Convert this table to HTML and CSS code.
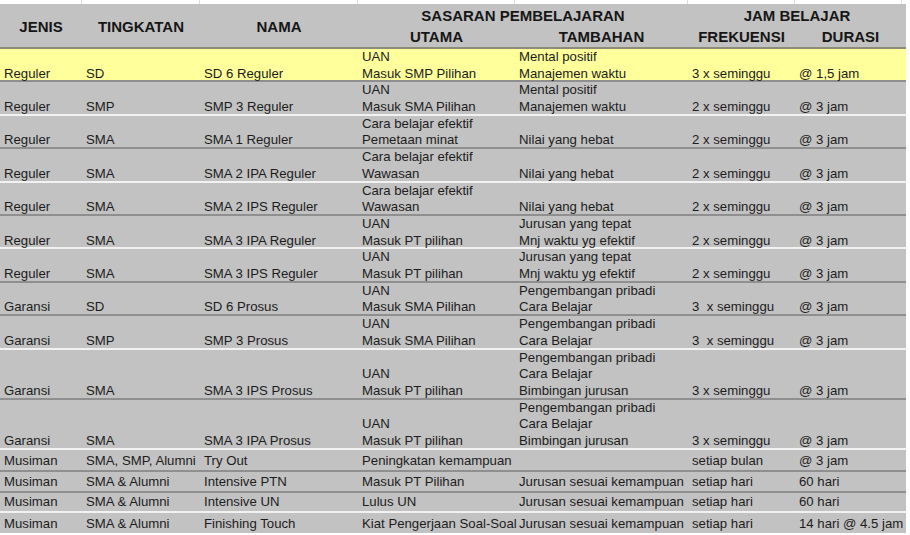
FILE: index.html
```html
<!DOCTYPE html>
<html lang="id">
<head>
<meta charset="utf-8">
<title>Program Belajar</title>
<link rel="stylesheet" href="styles.css">
</head>
<body>
<div class="sheet">
  <div class="strip grid"><span></span><span></span><span></span><span></span><span></span><span></span><span></span></div>

  <div class="head grid">
    <div class="hc tall">JENIS</div>
    <div class="hc tall">TINGKATAN</div>
    <div class="hc tall">NAMA</div>
    <div class="hc wide2 ra">SASARAN PEMBELAJARAN</div>
    <div class="hc wide2 ra">JAM BELAJAR</div>
    <div class="hc rb">UTAMA</div>
    <div class="hc rb">TAMBAHAN</div>
    <div class="hc rb">FREKUENSI</div>
    <div class="hc rb">DURASI</div>
  </div>

  <div class="row grid h2 dk yel">
    <div class="c">Reguler</div><div class="c">SD</div><div class="c">SD 6 Reguler</div>
    <div class="c"><span>UAN</span><span>Masuk SMP Pilihan</span></div>
    <div class="c"><span>Mental positif</span><span>Manajemen waktu</span></div>
    <div class="c">3 x seminggu</div><div class="c">@ 1,5 jam</div>
  </div>

  <div class="row grid h2 dk">
    <div class="c">Reguler</div><div class="c">SMP</div><div class="c">SMP 3 Reguler</div>
    <div class="c"><span>UAN</span><span>Masuk SMA Pilihan</span></div>
    <div class="c"><span>Mental positif</span><span>Manajemen waktu</span></div>
    <div class="c">2 x seminggu</div><div class="c">@ 3 jam</div>
  </div>

  <div class="row grid h2 lt">
    <div class="c">Reguler</div><div class="c">SMA</div><div class="c">SMA 1 Reguler</div>
    <div class="c"><span>Cara belajar efektif</span><span>Pemetaan minat</span></div>
    <div class="c">Nilai yang hebat</div>
    <div class="c">2 x seminggu</div><div class="c">@ 3 jam</div>
  </div>

  <div class="row grid h2 dk">
    <div class="c">Reguler</div><div class="c">SMA</div><div class="c">SMA 2 IPA Reguler</div>
    <div class="c"><span>Cara belajar efektif</span><span>Wawasan</span></div>
    <div class="c">Nilai yang hebat</div>
    <div class="c">2 x seminggu</div><div class="c">@ 3 jam</div>
  </div>

  <div class="row grid h2 lt">
    <div class="c">Reguler</div><div class="c">SMA</div><div class="c">SMA 2 IPS Reguler</div>
    <div class="c"><span>Cara belajar efektif</span><span>Wawasan</span></div>
    <div class="c">Nilai yang hebat</div>
    <div class="c">2 x seminggu</div><div class="c">@ 3 jam</div>
  </div>

  <div class="row grid h2 dk">
    <div class="c">Reguler</div><div class="c">SMA</div><div class="c">SMA 3 IPA Reguler</div>
    <div class="c"><span>UAN</span><span>Masuk PT pilihan</span></div>
    <div class="c"><span>Jurusan yang tepat</span><span>Mnj waktu yg efektif</span></div>
    <div class="c">2 x seminggu</div><div class="c">@ 3 jam</div>
  </div>

  <div class="row grid h2 lt">
    <div class="c">Reguler</div><div class="c">SMA</div><div class="c">SMA 3 IPS Reguler</div>
    <div class="c"><span>UAN</span><span>Masuk PT pilihan</span></div>
    <div class="c"><span>Jurusan yang tepat</span><span>Mnj waktu yg efektif</span></div>
    <div class="c">2 x seminggu</div><div class="c">@ 3 jam</div>
  </div>

  <div class="row grid h2 dk">
    <div class="c">Garansi</div><div class="c">SD</div><div class="c">SD 6 Prosus</div>
    <div class="c"><span>UAN</span><span>Masuk SMA Pilihan</span></div>
    <div class="c"><span>Pengembangan pribadi</span><span>Cara Belajar</span></div>
    <div class="c">3&nbsp; x seminggu</div><div class="c">@ 3 jam</div>
  </div>

  <div class="row grid h2 dk">
    <div class="c">Garansi</div><div class="c">SMP</div><div class="c">SMP 3 Prosus</div>
    <div class="c"><span>UAN</span><span>Masuk SMA Pilihan</span></div>
    <div class="c"><span>Pengembangan pribadi</span><span>Cara Belajar</span></div>
    <div class="c">3&nbsp; x seminggu</div><div class="c">@ 3 jam</div>
  </div>

  <div class="row grid h3 lt">
    <div class="c">Garansi</div><div class="c">SMA</div><div class="c">SMA 3 IPS Prosus</div>
    <div class="c"><span>UAN</span><span>Masuk PT pilihan</span></div>
    <div class="c"><span>Pengembangan pribadi</span><span>Cara Belajar</span><span>Bimbingan jurusan</span></div>
    <div class="c">3 x seminggu</div><div class="c">@ 3 jam</div>
  </div>

  <div class="row grid h3 dk">
    <div class="c">Garansi</div><div class="c">SMA</div><div class="c">SMA 3 IPA Prosus</div>
    <div class="c"><span>UAN</span><span>Masuk PT pilihan</span></div>
    <div class="c"><span>Pengembangan pribadi</span><span>Cara Belajar</span><span>Bimbingan jurusan</span></div>
    <div class="c">3 x seminggu</div><div class="c">@ 3 jam</div>
  </div>

  <div class="row grid s22 lt">
    <div class="c">Musiman</div><div class="c">SMA, SMP, Alumni</div><div class="c">Try Out</div>
    <div class="c">Peningkatan kemampuan</div>
    <div class="c"></div>
    <div class="c">setiap bulan</div><div class="c">@ 3 jam</div>
  </div>

  <div class="row grid s21 dk">
    <div class="c">Musiman</div><div class="c">SMA &amp; Alumni</div><div class="c">Intensive PTN</div>
    <div class="c">Masuk PT Pilihan</div>
    <div class="c">Jurusan sesuai kemampuan</div>
    <div class="c">setiap hari</div><div class="c">60 hari</div>
  </div>

  <div class="row grid s20 dk">
    <div class="c">Musiman</div><div class="c">SMA &amp; Alumni</div><div class="c">Intensive UN</div>
    <div class="c">Lulus UN</div>
    <div class="c">Jurusan sesuai kemampuan</div>
    <div class="c">setiap hari</div><div class="c">60 hari</div>
  </div>

  <div class="row grid s22 lt">
    <div class="c">Musiman</div><div class="c">SMA &amp; Alumni</div><div class="c">Finishing Touch</div>
    <div class="c">Kiat Pengerjaan Soal-Soal</div>
    <div class="c">Jurusan sesuai kemampuan</div>
    <div class="c">setiap hari</div><div class="c">14 hari @ 4.5 jam</div>
  </div>
</div>
</body>
</html>
```

FILE: styles.css
```css
* { box-sizing: border-box; }

html, body {
  margin: 0;
  padding: 0;
  background: #ffffff;
}

body {
  width: 910px;
  height: 535px;
  overflow: hidden;
  font-family: "Liberation Sans", Arial, sans-serif;
  color: #1c1c1c;
}

.sheet {
  width: 906px;
}

.grid {
  display: grid;
  grid-template-columns: 82px 118px 158px 157px 173px 107px 111px;
}

.strip {
  height: 4px;
  background: #ffffff;
}

.strip span {
  border-right: 1px solid #dcdcdc;
}

.strip span:last-child {
  border-right: 1px solid #e6e6e6;
  margin-right: 4px;
}

.head {
  height: 43px;
  grid-template-rows: 21px 22px;
  background: #c2c2c2;
  font-size: 15px;
  font-weight: bold;
  color: #161616;
}

.hc {
  display: flex;
  align-items: center;
  justify-content: center;
  white-space: nowrap;
}

.hc.tall {
  grid-row: 1 / span 2;
  padding-top: 1px;
}

.hc.wide2 {
  grid-column: span 2;
}

.hc.ra {
  grid-row: 1;
  padding-top: 1px;
}

.hc.rb {
  grid-row: 2;
  padding-top: 1px;
}

.head .hc:nth-child(5) { grid-column: 6 / span 2; }
.head .hc:nth-child(4) { grid-column: 4 / span 2; }

.row {
  background: #c2c2c2;
  font-size: 13.2px;
  line-height: 16.7px;
}

.row.yel {
  background: #ffff9c;
}

.row.dk { border-top: 2px solid #8f8f8f; }
.row.lt { border-top: 2px solid #f2f2f2; }

.row.h2 { height: 33.4px; }
.row.h3 { height: 50px; }
.row.s22 { height: 22px; }
.row.s21 { height: 21px; }
.row.s20 { height: 20px; }

.row.dk.yel { border-top-color: #8c8c7a; }

.c {
  display: flex;
  flex-direction: column;
  justify-content: flex-end;
  padding-left: 4px;
  white-space: nowrap;
  overflow: visible;
}

.c span {
  display: block;
}
```
